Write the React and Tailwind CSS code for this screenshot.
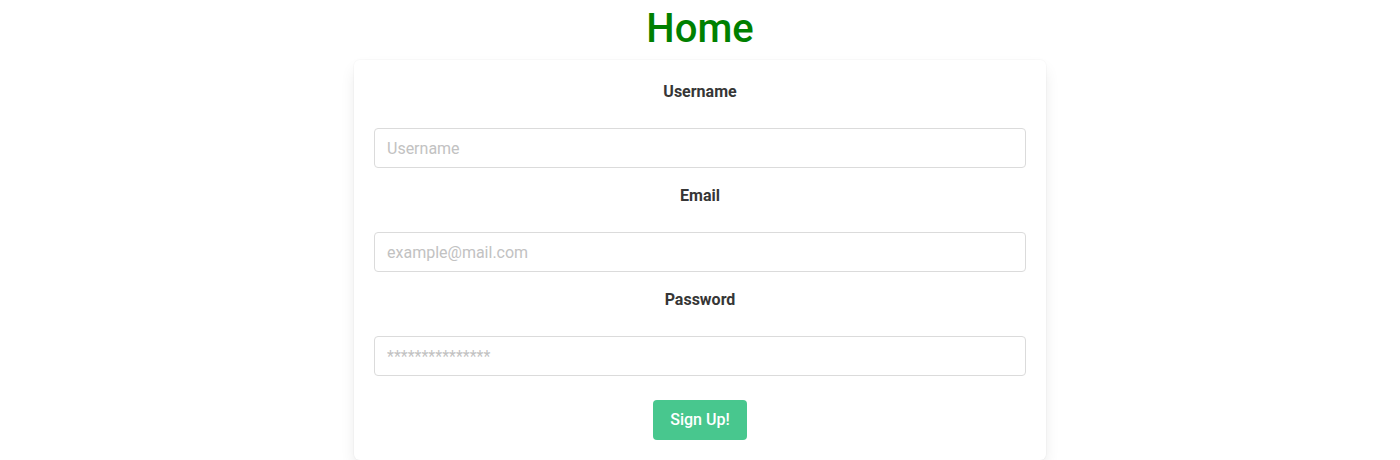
import React from 'react'

const Field = ({ label, placeholder, type = 'text', first }) => (
  <div className={first ? '' : 'mt-4'}>
    <label className="block text-center text-base font-bold leading-6 text-[#363636]">{label}</label>
    <input
      type={type}
      placeholder={placeholder}
      className="mt-6 block h-10 w-full rounded border border-[#dbdbdb] px-3 text-base text-[#363636] placeholder:text-[#c2c2c2] outline-none"
    />
  </div>
)

const App = () => {
  return (
    <div className="min-h-[460px] bg-white font-['Roboto',sans-serif]">
      <h1 className="pt-[5px] text-center text-[40px] font-medium leading-[48px] text-[#008000]">Home</h1>
      <div className="mx-auto mt-[7px] w-[692px] rounded-md bg-white px-5 pb-5 pt-5 shadow-[0_0.5em_1em_-0.125em_rgba(10,10,10,0.1),0_0_0_1px_rgba(10,10,10,0.02)]">
        <Field first label="Username" placeholder="Username" />
        <Field label="Email" placeholder="example@mail.com" type="email" />
        <Field label="Password" placeholder="***************" />
        <div className="mt-6 flex justify-center">
          <button className="h-10 w-[94px] rounded bg-[#48c78e] text-base font-medium text-white">Sign Up!</button>
        </div>
      </div>
    </div>
  )
}

export default App
